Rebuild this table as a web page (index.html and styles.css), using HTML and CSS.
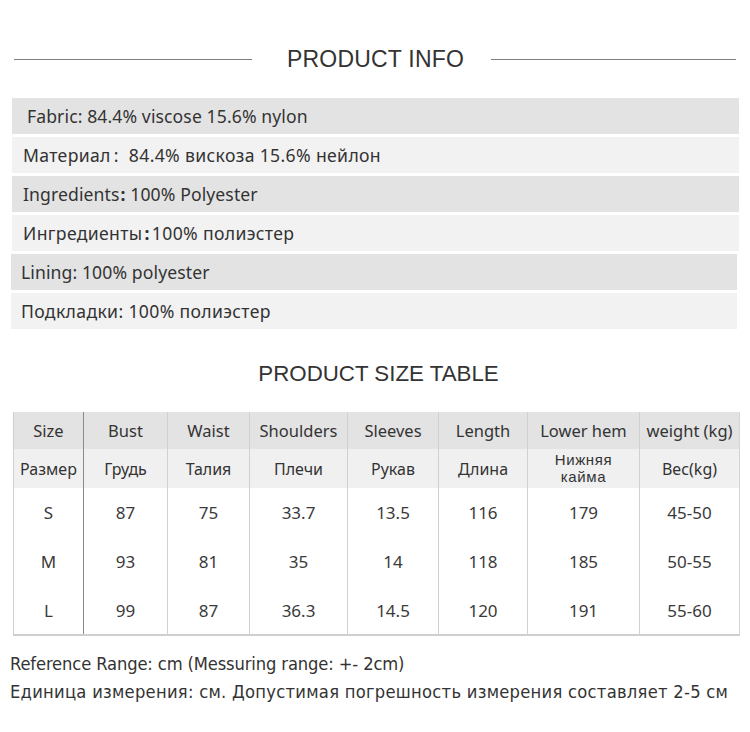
FILE: index.html
```html
<!DOCTYPE html>
<html lang="ru">
<head>
<meta charset="utf-8">
<title>Product info</title>
<link rel="stylesheet" href="styles.css">
</head>
<body>
<div class="page">
  <div class="heading">
    <span class="rule rule-left"></span>
    <h1 class="title">PRODUCT INFO</h1>
    <span class="rule rule-right"></span>
  </div>

  <ul class="info">
    <li class="info-row dark first">Fabric: 84.4% viscose 15.6% nylon</li>
    <li class="info-row light ru">Материал<span class="colon wide">:</span>&nbsp;84.4% вискоза 15.6% нейлон</li>
    <li class="info-row dark">Ingredients<span class="colon bold">:</span>&nbsp;100% Polyester</li>
    <li class="info-row light ru">Ингредиенты<span class="colon tight">:</span>100% полиэстер</li>
    <li class="info-row dark narrow">Lining: 100% polyester</li>
    <li class="info-row light narrow ru">Подкладки: 100% полиэстер</li>
  </ul>

  <h2 class="subtitle">PRODUCT SIZE TABLE</h2>

  <table class="sizes">
    <colgroup>
      <col class="c1"><col class="c2"><col class="c3"><col class="c4">
      <col class="c5"><col class="c6"><col class="c7"><col class="c8">
    </colgroup>
    <tr class="head-en">
      <td>Size</td><td>Bust</td><td>Waist</td><td>Shoulders</td><td>Sleeves</td><td>Length</td><td>Lower hem</td><td>weight (kg)</td>
    </tr>
    <tr class="head-ru">
      <td>Размер</td><td>Грудь</td><td>Талия</td><td>Плечи</td><td>Рукав</td><td>Длина</td><td class="two-line">Нижняя<br>кайма</td><td>Вес(kg)</td>
    </tr>
    <tr class="data">
      <td>S</td><td>87</td><td>75</td><td>33.7</td><td>13.5</td><td>116</td><td>179</td><td>45-50</td>
    </tr>
    <tr class="data">
      <td>M</td><td>93</td><td>81</td><td>35</td><td>14</td><td>118</td><td>185</td><td>50-55</td>
    </tr>
    <tr class="data last">
      <td>L</td><td>99</td><td>87</td><td>36.3</td><td>14.5</td><td>120</td><td>191</td><td>55-60</td>
    </tr>
  </table>

  <div class="notes">
    <p class="note-en">Reference Range: cm (Messuring range: +- 2cm)</p>
    <p class="note-ru">Единица измерения: см. Допустимая погрешность измерения составляет 2-5 см</p>
  </div>
</div>
</body>
</html>
```

FILE: styles.css
```css
* { box-sizing: border-box; }

html, body {
  margin: 0;
  padding: 0;
  background: #ffffff;
}

.page {
  width: 750px;
  height: 732px;
  overflow: hidden;
  color: #333333;
  font-family: "Noto Sans", "Open Sans", sans-serif;
}

.heading {
  display: flex;
  align-items: center;
  height: 40px;
  margin-top: 39px;
  padding: 0 14px;
}

.rule {
  display: block;
  height: 1px;
  background: #7d7d7d;
}

.rule-left { width: 238px; }
.rule-right { flex: 1; }

.title {
  margin: 0 27px 0 35px;
  font-family: "Liberation Sans", Arial, sans-serif;
  font-weight: normal;
  font-size: 23px;
  color: #333;
  letter-spacing: 0.2px;
}

.info {
  list-style: none;
  margin: 19px 0 0 12px;
  padding: 0;
  width: 727px;
  display: flex;
  flex-direction: column;
  gap: 3px;
}

.info-row {
  height: 36px;
  display: flex;
  align-items: center;
  padding-left: 11px;
  font-size: 17.6px;
  letter-spacing: 0.1px;
  color: #333;
  white-space: pre;
}

.info-row.ru { letter-spacing: 0.35px; }

.colon { margin-left: 3px; }
.colon.wide { margin-left: 3px; margin-right: 5px; }
.colon.bold { font-weight: bold; margin-left: 1px; }
.colon.tight { margin-left: 2px; margin-right: 2px; font-weight: bold; }

.info-row.first { padding-left: 15px; }
.info-row.narrow { padding-left: 10px; margin-left: -1px; width: 726px; }

.dark { background: #e3e3e3; }
.light { background: #f2f2f2; }

.subtitle {
  margin: 29px 0 0;
  height: 31px;
  line-height: 31px;
  text-align: center;
  font-family: "Liberation Sans", Arial, sans-serif;
  font-weight: normal;
  font-size: 22.3px;
  color: #333;
  padding-left: 7px;
}

.sizes {
  margin: 23px 0 0 13px;
  width: 726px;
  table-layout: fixed;
  border-collapse: collapse;
  border-left: 1px solid #c4c4c4;
  border-right: 1px solid #d4d4d4;
  border-bottom: 2px solid #cfcfcf;
}

.c1 { width: 70px; }
.c2 { width: 84px; }
.c3 { width: 82px; }
.c4 { width: 98px; }
.c5 { width: 91px; }
.c6 { width: 89px; }
.c7 { width: 112px; }
.c8 { width: 100px; }

.sizes td {
  padding: 0;
  text-align: center;
  vertical-align: middle;
  border-left: 1px solid #d0d0d0;
  white-space: nowrap;
  color: #333;
}

.sizes td:nth-child(2) { border-left-color: #8a8a8a; }

.head-en { height: 37px; background: #e3e3e3; }
.head-en td { font-size: 16.5px; }

.head-ru { height: 39px; background: #f0f0f0; }
.head-ru td { font-size: 16px; }

.sizes .two-line {
  font-family: "Liberation Sans", Arial, sans-serif;
  font-size: 15px;
  line-height: 16.8px;
  letter-spacing: 0.6px;
}

.data { height: 49px; background: #fff; }
.data td { font-size: 17px; color: #3a3a3a; }

.notes {
  margin-top: 14px;
  padding-left: 10px;
  font-family: "DejaVu Sans Condensed", "DejaVu Sans", sans-serif;
  font-stretch: condensed;
  font-size: 18.2px;
  color: #333;
}

.notes p {
  margin: 0;
  height: 28px;
  line-height: 28px;
  white-space: nowrap;
}

.note-en { letter-spacing: -0.13px; }
.note-ru { letter-spacing: 0.27px; }
```
